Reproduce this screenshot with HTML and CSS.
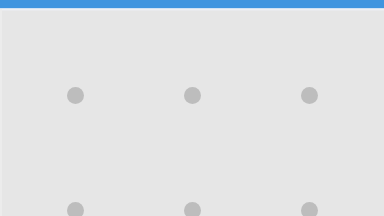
FILE: index.html
```html
<!DOCTYPE html>
<html lang="en">
<head>
    <meta charset="UTF-8">
    <meta name="viewport" content="width=device-width, initial-scale=1.0">
    <title>Pattern Lock</title>
    <link rel="stylesheet" href="styles.css">
</head>
<body>
    <div class="topbar"></div>
    <div class="lock-screen">
        <div class="pattern-grid">
            <div class="cell"><span class="dot"></span></div>
            <div class="cell"><span class="dot"></span></div>
            <div class="cell"><span class="dot"></span></div>
            <div class="cell"><span class="dot"></span></div>
            <div class="cell"><span class="dot"></span></div>
            <div class="cell"><span class="dot"></span></div>
            <div class="cell"><span class="dot"></span></div>
            <div class="cell"><span class="dot"></span></div>
            <div class="cell"><span class="dot"></span></div>
        </div>
    </div>
</body>
</html>
```

FILE: styles.css
```css
body {
    margin: 0;
    font-family: "Liberation Sans", Arial, sans-serif;
    background-color: #e6e6e6;
    overflow: hidden;
}
.topbar {
    height: 8px;
    background-color: #3f95df;
    border-bottom: 1px solid #cfe2f4;
    box-shadow: 0 1px 0 #eef0f3, 0 2px 0 #e9eaed;
}
.lock-screen {
    height: 400px;
    border-left: 2px solid #ececec;
    padding: 29px 15px 0 15px;
}
.pattern-grid {
    display: grid;
    grid-template-columns: repeat(3, 117px);
    grid-auto-rows: 115px;
}
.cell {
    display: flex;
    justify-content: center;
    align-items: center;
}
.dot {
    width: 17px;
    height: 17px;
    border-radius: 50%;
    background-color: #bdbdbd;
}
```
